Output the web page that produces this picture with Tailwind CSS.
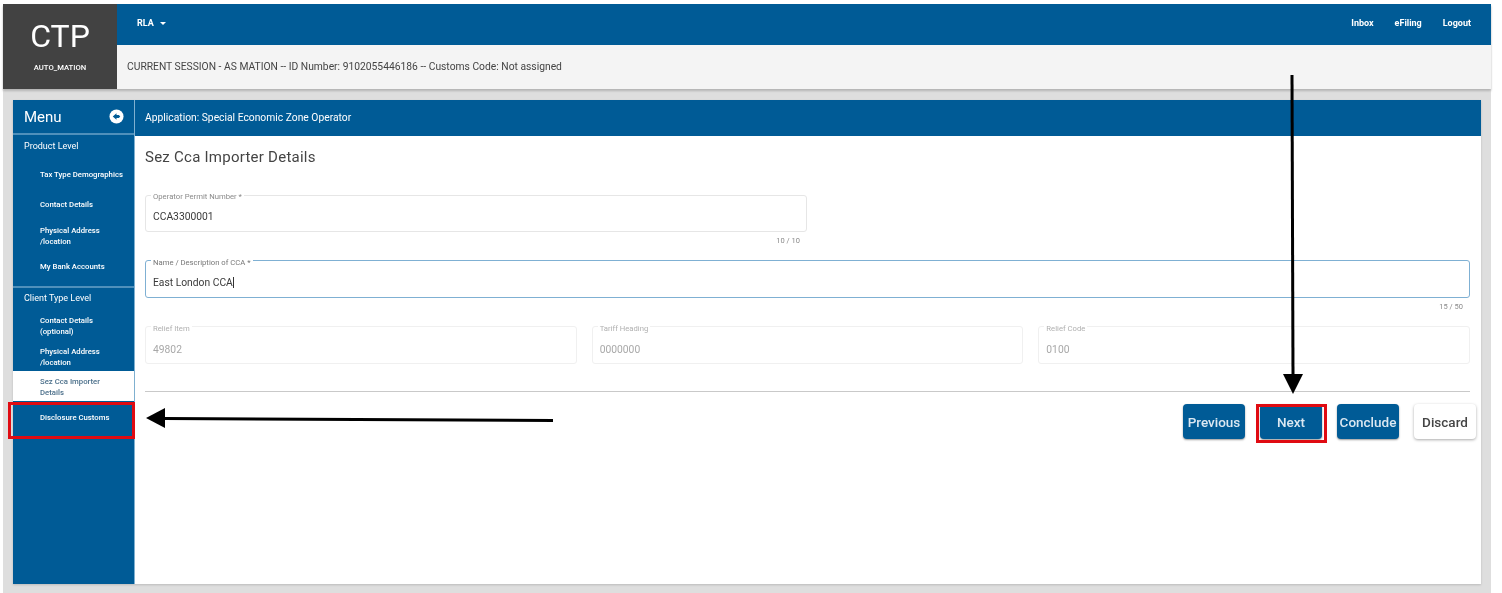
<!DOCTYPE html>
<html>
<head>
<meta charset="utf-8">
<script src="https://cdn.jsdelivr.net/npm/@tailwindcss/browser@4"></script>
</head>
<body class="bg-white">
<div class="relative w-[1502px] h-[593px] overflow-hidden bg-white font-['Roboto',sans-serif] text-[#3a3a3a]">
  <div class="absolute left-[3px] top-[4px] w-[1488px] h-[589px] flex flex-col bg-[#dedede] blur-[0.5px]">
    <header class="flex h-[85px] shrink-0 shadow-[0_2px_2px_#b5b5b5]">
      <div class="w-[114px] bg-[#424242] flex flex-col items-center text-white">
        <div class="text-[32px] leading-[34px] mt-[15px]">CTP</div>
        <div class="text-[7.7px] leading-[10px] mt-[10px] font-medium">AUTO_MATION</div>
      </div>
      <div class="flex-1 flex flex-col">
        <div class="h-[41px] bg-[#005b96] text-white flex items-center justify-between pl-[20px] pr-[20px] text-[9px] font-bold">
          <div class="flex items-center gap-[6px] -mt-[2px]"><span>RLA</span><span class="w-0 h-0 border-x-[3px] border-x-transparent border-t-[3px] border-t-white"></span></div>
          <div class="flex gap-[21px] -mt-[1px]"><span>Inbox</span><span>eFiling</span><span>Logout</span></div>
        </div>
        <div class="flex-1 bg-[#f4f4f4] flex items-center pl-[10px] text-[10.3px] text-[#444]">CURRENT SESSION - AS MATION -- ID Number: 9102055446186 -- Customs Code: Not assigned</div>
      </div>
    </header>
    <div class="ml-[10px] mt-[11px] w-[1468px] h-[484px] flex bg-white shadow-[0_1px_2px_#bbb]">
      <aside class="w-[122px] shrink-0 bg-[#005b96] text-white border-r border-[#7fb0d0]">
        <div class="h-[35px] flex items-center justify-between pl-[11px] pr-[10px] border-b-2 border-[#4f90bb]">
          <span class="text-[15px] mt-[1px]">Menu</span>
          <svg width="15" height="15" viewBox="0 0 16 16"><circle cx="8" cy="8" r="7.5" fill="#fff"/><path d="M4 8 8 4.5v2h2.5l1.5 1.5-1.5 1.5H8v2z" fill="#005b96"/></svg>
        </div>
        <div class="h-[24px] pl-[11px] pt-[5px] text-[9px] leading-[12px]">Product Level</div>
        <div class="flex flex-col text-[7.75px] leading-[10.5px] font-medium pl-[27px]">
          <div class="h-[31px] pt-[11px] whitespace-nowrap">Tax Type Demographics</div>
          <div class="h-[21px] pt-[10px]">Contact Details</div>
          <div class="h-[41px] pt-[15px]">Physical Address<br>/location</div>
          <div class="h-[34px] pt-[10px]">My Bank Accounts</div>
        </div>
        <div class="h-[25px] pl-[11px] pt-[4px] text-[9px] leading-[12px] border-t-2 border-[#4f90bb]">Client Type Level</div>
        <div class="flex flex-col text-[7.75px] leading-[10.5px] font-medium">
          <div class="h-[30px] pl-[27px] pt-[5px]">Contact Details<br>(optional)</div>
          <div class="h-[30px] pl-[27px] pt-[6px]">Physical Address<br>/location</div>
          <div class="h-[30px] pl-[27px] pt-[6px] bg-white text-[#4b6f8a]">Sez Cca Importer<br>Details</div>
          <div class="h-[20px] pl-[27px] pt-[12px] whitespace-nowrap">Disclosure Customs</div>
        </div>
      </aside>
      <main class="flex-1 flex flex-col">
        <div class="h-[36px] shrink-0 bg-[#005b96] text-white text-[10.3px] flex items-center pl-[10px]">Application: Special Economic Zone Operator</div>
        <div class="pl-[10px] pr-[11px] flex flex-col">
          <h1 class="text-[15px] leading-[20px] mt-[11px] text-[#444] tracking-[0.25px]">Sez Cca Importer Details</h1>
          <div class="relative mt-[28px] w-[662px] h-[37px] border border-[#e6e6e6] rounded-[3px] pl-[7px] flex items-center text-[10.3px] pt-[7px]">
            <span class="absolute left-[5px] -top-[4px] bg-white px-[2px] text-[7.7px] leading-[9px] text-[#8a8a8a]">Operator Permit Number *</span>CCA3300001
          </div>
          <div class="w-[662px] text-right pr-[7px] h-[28px] pt-[4px] text-[7.5px] leading-[10px] text-[#8a8a8a]">10 / 10</div>
          <div class="relative h-[38px] border-[1.5px] border-[#7fb0d3] rounded-[3px] pl-[7px] flex items-center text-[10.3px] pt-[7px]">
            <span class="absolute left-[5px] -top-[3px] bg-white px-[2px] text-[7.7px] leading-[9px] text-[#777]">Name / Description of CCA *</span>East London CCA<span class="w-px h-[11px] bg-[#333]"></span>
          </div>
          <div class="text-right pr-[7px] h-[28px] pt-[4px] text-[7.5px] leading-[10px] text-[#8a8a8a]">15 / 50</div>
          <div class="grid grid-cols-3 gap-[15px]">
            <div class="relative h-[38px] border border-[#f0f0f0] rounded-[3px] pl-[7px] flex items-center text-[10.3px] pt-[9px] text-[#a8a8a8]">
              <span class="absolute left-[5px] -top-[3px] bg-white px-[2px] text-[7.7px] leading-[9px] text-[#b0b0b0]">Relief Item</span>49802
            </div>
            <div class="relative h-[38px] border border-[#f0f0f0] rounded-[3px] pl-[7px] flex items-center text-[10.3px] pt-[9px] text-[#a8a8a8]">
              <span class="absolute left-[5px] -top-[3px] bg-white px-[2px] text-[7.7px] leading-[9px] text-[#b0b0b0]">Tariff Heading</span>0000000
            </div>
            <div class="relative h-[38px] border border-[#f0f0f0] rounded-[3px] pl-[7px] flex items-center text-[10.3px] pt-[9px] text-[#a8a8a8]">
              <span class="absolute left-[5px] -top-[3px] bg-white px-[2px] text-[7.7px] leading-[9px] text-[#b0b0b0]">Relief Code</span>0100
            </div>
          </div>
          <div class="mt-[27px] h-[1px] bg-[#c9c9c9]"></div>
          <div class="mt-[12px] -mr-[6px] flex justify-end gap-[15px] text-[13.5px] font-medium">
            <button class="w-[62px] h-[35px] pt-[1px] rounded-[4px] bg-[#005b96] text-[#dbe8f2] shadow-[0_1px_2px_#999]">Previous</button>
            <button class="w-[62px] h-[35px] pt-[1px] rounded-[4px] bg-[#005b96] text-[#dbe8f2] shadow-[0_1px_2px_#999]">Next</button>
            <button class="w-[62px] h-[35px] pt-[1px] rounded-[4px] bg-[#005b96] text-[#dbe8f2] shadow-[0_1px_2px_#999]">Conclude</button>
            <button class="w-[62px] h-[35px] pt-[1px] rounded-[4px] bg-white text-[#444] shadow-[0_1px_3px_#aaa]">Discard</button>
          </div>
        </div>
      </main>
    </div>
  </div>
  <div class="absolute left-[8px] top-[402px] w-[127px] h-[37px] border-[3px] border-[#e00b12]"></div>
  <div class="absolute left-[1256px] top-[404px] w-[71px] h-[39px] border-[3px] border-[#e00b12]"></div>
  <svg class="absolute left-0 top-0" width="1502" height="593" viewBox="0 0 1502 593">
    <path d="M1292 75 1293 376" stroke="#000" stroke-width="3"/>
    <path d="M1283 374h20l-10 20z" fill="#000"/>
    <path d="M553 420.5 164 418.5" stroke="#000" stroke-width="3"/>
    <path d="M165 408v20l-19-10z" fill="#000"/>
  </svg>
</div>
</body>
</html>
